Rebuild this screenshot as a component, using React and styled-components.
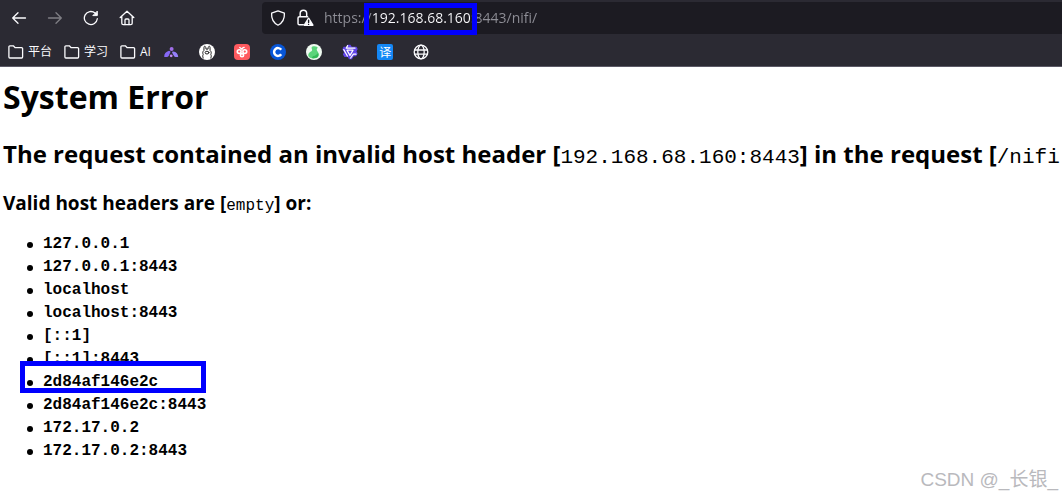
import React, { useState } from 'react';
import styled, { createGlobalStyle } from 'styled-components';

const GlobalStyle = createGlobalStyle`
    * {
        box-sizing: border-box;
    }

    body {
        margin: 0;
        background: #fff;
        color: #000;
        font-family: 'Open Sans', 'Noto Sans CJK SC', sans-serif;
    }
`;

const Window = styled.div`
    min-height: 100vh;
    overflow: hidden;
    position: relative;
`;

const Chrome = styled.header`
    background: #2b2a33;
    color: #fbfbfe;
    border-bottom: 1px solid #5b5966;
`;

const Toolbar = styled.div`
    display: flex;
    align-items: center;
    padding: 2px 0 2px 3px;
`;

const NavButtons = styled.nav`
    display: flex;
    gap: 4px;
    width: 259px;
    flex-shrink: 0;
`;

const NavButton = styled.button`
    display: flex;
    align-items: center;
    justify-content: center;
    width: 32px;
    height: 32px;
    padding: 0;
    border: 0;
    border-radius: 4px;
    background: none;
    color: inherit;

    &:disabled {
        opacity: 0.4;
    }
`;

const AddressBar = styled.div`
    position: relative;
    display: flex;
    align-items: center;
    gap: 10px;
    flex: 1;
    height: 32px;
    padding-left: 8px;
    border-radius: 4px 0 0 4px;
    background: #1c1b22;
`;

const AddressInput = styled.input`
    flex: 1;
    min-width: 0;
    height: 32px;
    padding: 0 0 2px;
    border: 0;
    outline: 0;
    font: 14px 'Open Sans', sans-serif;
    color: transparent;
    caret-color: #fbfbfe;
    background: linear-gradient(to right, #8f8f97 48px, #fbfbfe 48px 147px, #8f8f97 147px);
    background-clip: text;
    -webkit-background-clip: text;
`;

const Highlight = styled.span`
    position: absolute;
    border: 5px solid #0000fe;
    pointer-events: none;
`;

const HostHighlight = styled(Highlight)`
    left: 102px;
    top: 1px;
    width: 113px;
    height: 32px;
`;

const EntryHighlight = styled(Highlight)`
    left: -7px;
    top: -10px;
    width: 186px;
    height: 32px;
`;

const Bookmarks = styled.div`
    display: flex;
    align-items: center;
    gap: 12px;
    height: 30px;
    padding: 2px 8px 0;
`;

const Folder = styled.button`
    display: flex;
    align-items: center;
    gap: 4px;
    padding: 0;
    border: 0;
    background: none;
    color: inherit;
    font: 12px/16px 'Open Sans', 'Noto Sans CJK SC', sans-serif;
    white-space: nowrap;
`;

const Sites = styled.div`
    display: flex;
    justify-content: space-between;
    flex: 0 1 266px;
`;

const Site = styled.a`
    display: flex;
    color: inherit;
    text-decoration: none;
`;

const TranslateBadge = styled.span`
    width: 16px;
    height: 16px;
    border-radius: 2px;
    background: #1487f5;
    color: #fff;
    font: 12px/16px 'Noto Sans CJK SC', sans-serif;
    text-align: center;
`;

const Page = styled.main`
    padding: 8px 0 0 3px;
    white-space: nowrap;
`;

const Title = styled.h1`
    margin: 0;
    font-size: 32px;
    line-height: 44px;
`;

const Message = styled.h2`
    margin: 17px 0 0;
    font-size: 24px;
    line-height: 36px;
`;

const Subtitle = styled.h3`
    margin: 14px 0 0;
    font-size: 19px;
    line-height: 26px;
`;

const Code = styled.span`
    font-family: 'Liberation Mono', monospace;
    font-size: ${(props) => props.$size};
    font-weight: 400;
`;

const HostList = styled.ul`
    margin: 14px 0 0;
    padding: 0 0 0 24px;
    list-style: none;
    font: 700 16px/23px 'Liberation Mono', monospace;
`;

const Host = styled.li`
    position: relative;
    display: flex;
    align-items: center;
    gap: 10px;

    &::before {
        content: '';
        width: 6px;
        height: 6px;
        border-radius: 50%;
        background: #000;
    }
`;

const Watermark = styled.div`
    position: absolute;
    right: 4px;
    bottom: 3px;
    color: #b9b9bd;
    font: 19px/28px 'Liberation Sans', 'Noto Sans CJK SC', sans-serif;
`;

const Icon = ({ size = 16, children }) => (
    <svg
        width={size}
        height={size}
        viewBox="0 0 16 16"
        fill="none"
        stroke="currentColor"
        strokeWidth="1.3"
        strokeLinecap="round"
        strokeLinejoin="round"
        aria-hidden="true"
    >
        {children}
    </svg>
);

const FolderIcon = () => (
    <Icon>
        <path d="M.9 13V2.8a1 1 0 0 1 1-1h3.4l1.9 1.9h6.4a1 1 0 0 1 1 1V13a1 1 0 0 1-1 1H1.9a1 1 0 0 1-1-1z" />
    </Icon>
);

const sites = [
    {
        name: 'Peaks',
        icon: (
            <Icon>
                <g stroke="none">
                    <circle cx="8.6" cy="5" r="2" fill="#a06ee8" />
                    <path d="M1.2 13c-.2-3 1.6-5.4 4.8-6.2 1.2 0 1.7.8 1.3 1.8L5.6 12c-.4.7-1 1-1.8 1z" fill="#8668f6" />
                    <path d="M10.2 7.4c3 .3 5 2.3 5 5.6h-2.6c-.7 0-1.3-.3-1.6-.9L9.3 9c-.4-.9 0-1.6.9-1.6z" fill="#9680fb" />
                    <circle cx="8.2" cy="11.8" r="1.4" fill="#c38af0" />
                </g>
            </Icon>
        ),
    },
    {
        name: 'Ollama',
        icon: (
            <Icon>
                <circle cx="8" cy="8" r="8" fill="#fff" stroke="none" />
                <g stroke="#222" strokeWidth="1">
                    <path d="M4.2 14c-.7-1.4-.6-2.5 0-3.6-.8-1.5-.4-3.1.7-3.9L5 3.2c.2-1.4 1.4-1.3 1.8.4l.2 1.5h2l.2-1.5c.4-1.7 1.6-1.8 1.8-.4l.1 3.3c1.1.8 1.5 2.4.7 3.9.6 1.1.7 2.2 0 3.6" />
                    <ellipse cx="8" cy="8.6" rx="1.9" ry="1.4" />
                </g>
            </Icon>
        ),
    },
    {
        name: 'Berry',
        icon: (
            <Icon>
                <rect width="16" height="16" rx="4" fill="#ff5a5f" stroke="none" />
                <g stroke="#fff" strokeWidth="1.6">
                    <circle cx="5.2" cy="7.6" r="1.9" />
                    <circle cx="10.8" cy="7.6" r="1.9" />
                    <circle cx="8" cy="11.2" r="1.6" />
                    <path d="M8 5.6c0-1.3.8-2.1 2.2-2.3M5.8 3.5 8 5.2" strokeWidth="1.3" />
                </g>
            </Icon>
        ),
    },
    {
        name: 'C',
        icon: (
            <Icon>
                <circle cx="8" cy="8" r="8" fill="#0756d8" stroke="none" />
                <path d="M11.2 10.2a3.9 3.9 0 1 1 0-4.4" stroke="#fff" strokeWidth="2.5" strokeLinecap="butt" />
            </Icon>
        ),
    },
    {
        name: 'Flask',
        icon: (
            <Icon>
                <circle cx="8" cy="8" r="8" fill="#effaf1" stroke="none" />
                <path
                    d="M6.4 2.6c1.5-.6 3.7-.4 4.9.5.5.4.3 1-.1 1.5-.6.7-.6 1.4-.1 2.2 2.5 3.2 2.2 6-.7 7.2-2.6.9-6.2.5-7.6-1.2-1.3-1.7-.3-3.9 1.7-5 1.6-.9 2-1.5 1.4-2.8-.5-1-.4-1.9.5-2.4z"
                    fill="#5bd47a"
                    stroke="none"
                />
                <path d="M7 12c2.2.4 3.6-1.6 5.1-3.1.9 2.5.1 4.2-1.9 4.9-1.4.5-3 .5-4.4.1z" fill="#35b957" stroke="none" />
            </Icon>
        ),
    },
    {
        name: 'Qwen',
        icon: (
            <Icon>
                <path
                    d="M5.5.7h3l1.2 2.1h4.8l1.2 2.3-1.2 2.3 1.1 2.2-1.5 2.7h-2.4l-1.8 3H7l-1.2-2.2H2.5L.9 10.4 2 8.2.4 5.3l1.2-2.5h2.7z"
                    fill="#6044e8"
                    stroke="none"
                />
                <path d="M5 6.2h6L8 11.4z" stroke="#fff" strokeWidth="1.3" />
                <path d="M5.6 1.6 4.2 4.2H13M1.8 5.6l3.6 6.4M14 10.2h-2.6L8.6 14" stroke="#fff" strokeWidth="1.2" />
            </Icon>
        ),
    },
    {
        name: 'Translate',
        icon: <TranslateBadge>译</TranslateBadge>,
    },
    {
        name: 'Website',
        icon: (
            <Icon>
                <circle cx="8" cy="8" r="6.8" />
                <ellipse cx="8" cy="8" rx="3.2" ry="6.8" />
                <path d="M1.5 6h13M1.5 10.2h13" />
            </Icon>
        ),
    },
];

const folders = ['平台', '学习', 'AI'];

const hosts = [
    '127.0.0.1',
    '127.0.0.1:8443',
    'localhost',
    'localhost:8443',
    '[::1]',
    '[::1]:8443',
    '2d84af146e2c',
    '2d84af146e2c:8443',
    '172.17.0.2',
    '172.17.0.2:8443',
];

const App = () => {
    const [address, setAddress] = useState('https://192.168.68.160:8443/nifi/');

    return (
        <Window>
            <GlobalStyle />
            <Chrome>
                <Toolbar>
                    <NavButtons>
                        <NavButton aria-label="Back">
                            <Icon>
                                <path d="M14.5 8H1.7M7 2.7 1.7 8 7 13.3" />
                            </Icon>
                        </NavButton>
                        <NavButton aria-label="Forward" disabled>
                            <Icon>
                                <path d="M1.5 8h12.8M9 2.7 14.3 8 9 13.3" />
                            </Icon>
                        </NavButton>
                        <NavButton aria-label="Reload">
                            <Icon>
                                <path d="M14.3 8.7A6.5 6.5 0 1 1 12.1 3.1l1.5 1.3" />
                                <path d="M14.3 1.5v4.1h-4.1z" fill="currentColor" strokeWidth="1" />
                            </Icon>
                        </NavButton>
                        <NavButton aria-label="Home">
                            <Icon>
                                <path d="M1.2 7.5 8 1.3l6.8 6.2M2.8 6.3v7a1.4 1.4 0 0 0 1.4 1.4h7.6a1.4 1.4 0 0 0 1.4-1.4v-7" />
                                <path d="M6 14.5V10a1 1 0 0 1 1-1h2a1 1 0 0 1 1 1v4.5" />
                            </Icon>
                        </NavButton>
                    </NavButtons>
                    <AddressBar>
                        <Icon>
                            <path d="M8 .9 14.4 3.2c.3 5.2-1.5 9.4-6.4 12-4.9-2.6-6.7-6.8-6.4-12z" />
                        </Icon>
                        <Icon size={18}>
                            <path d="M6.5 14H3a1.2 1.2 0 0 1-1.2-1.2V8A1.2 1.2 0 0 1 3 6.8h7.3M3.7 6.6V4a2.9 2.9 0 0 1 5.8 0v2.6" />
                            <path d="M11.2 8.2 15 14.4H7.4z" fill="currentColor" />
                            <path d="M11.2 10v2M11.2 13.6v.1" stroke="#1c1b22" strokeWidth="1.2" />
                        </Icon>
                        <AddressInput
                            aria-label="Address"
                            spellCheck="false"
                            value={address}
                            onChange={(e) => setAddress(e.target.value)}
                        />
                        <HostHighlight />
                    </AddressBar>
                </Toolbar>
                <Bookmarks>
                    {folders.map((name) => (
                        <Folder key={name}>
                            <FolderIcon />
                            {name}
                        </Folder>
                    ))}
                    <Sites>
                        {sites.map((site) => (
                            <Site key={site.name} href="#" aria-label={site.name}>
                                {site.icon}
                            </Site>
                        ))}
                    </Sites>
                </Bookmarks>
            </Chrome>
            <Page>
                <Title>System Error</Title>
                <Message>
                    The request contained an invalid host header [<Code $size="21px">192.168.68.160:8443</Code>] in the
                    request [<Code $size="21px">/nifi</Code>
                </Message>
                <Subtitle>
                    Valid host headers are [<Code $size="16px">empty</Code>] or:
                </Subtitle>
                <HostList>
                    {hosts.map((host) => (
                        <Host key={host}>
                            {host}
                            {host === '2d84af146e2c' && <EntryHighlight />}
                        </Host>
                    ))}
                </HostList>
            </Page>
            <Watermark>CSDN @_长银_</Watermark>
        </Window>
    );
};

export default App;
